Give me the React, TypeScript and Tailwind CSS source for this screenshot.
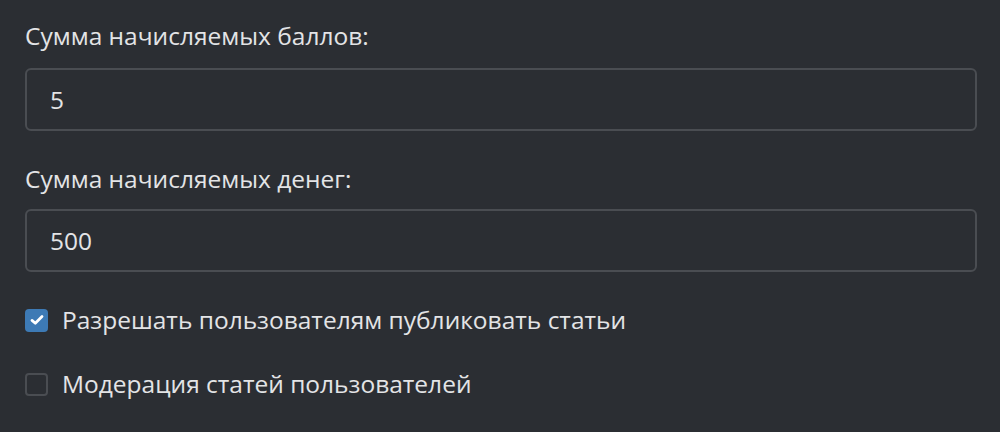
export default function App() {
  return (
    <div className="w-[1000px] h-[432px] bg-[#2b2e33] text-[#e3e4e6] font-['Open_Sans',sans-serif] pl-[25px] pr-[23px] pt-[18px]">
      <label className="block text-[24.5px] leading-[35px]">Сумма начисляемых баллов:</label>
      <input
        defaultValue="5"
        className="mt-[15px] block w-full h-[63px] rounded-[6px] border-2 border-[#4a4d52] bg-[#2b2e33] px-[23px] text-[24.5px] text-[#e3e4e6] outline-none"
      />
      <label className="block mt-[30px] text-[24.5px] leading-[35px]">Сумма начисляемых денег:</label>
      <input
        defaultValue="500"
        className="mt-[13px] block w-full h-[63px] rounded-[6px] border-2 border-[#4a4d52] bg-[#2b2e33] px-[23px] text-[24.5px] text-[#e3e4e6] outline-none"
      />
      <div className="mt-[31px] flex items-center gap-[14px] h-[34px]">
        <span className="w-[23px] h-[23px] rounded-[4px] bg-[#3d7ab5] flex items-center justify-center">
          <svg width="14" height="12" viewBox="0 0 14 12" fill="none">
            <path d="M2 6.4 L5.3 9.2 L12 2.6" stroke="white" strokeWidth="2.8" strokeLinecap="round" strokeLinejoin="round" />
          </svg>
        </span>
        <span className="text-[24.5px] leading-[34px]">Разрешать пользователям публиковать статьи</span>
      </div>
      <div className="mt-[30px] flex items-center gap-[14px] h-[34px]">
        <span className="w-[23px] h-[23px] rounded-[4px] border-2 border-[#4a4d52]" />
        <span className="text-[24.5px] leading-[34px]">Модерация статей пользователей</span>
      </div>
    </div>
  );
}
